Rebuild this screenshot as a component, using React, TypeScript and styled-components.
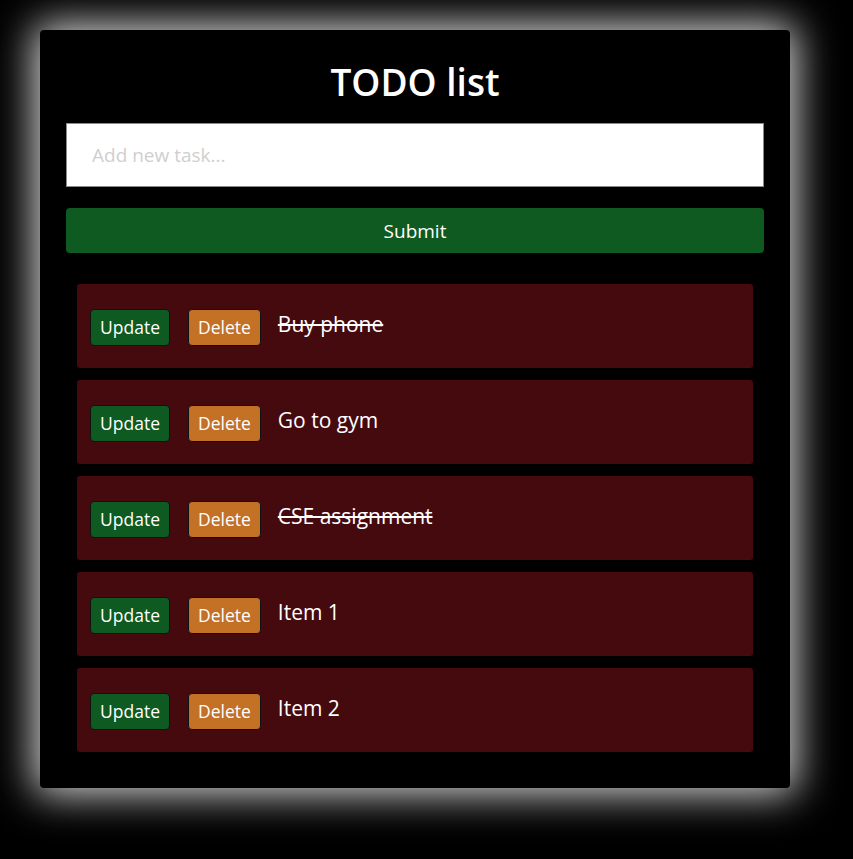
import React from "react";
import styled, { createGlobalStyle } from "styled-components";

const Global = createGlobalStyle`
  html, body { margin: 0; padding: 0; background: #000; }
  body { font-family: "Open Sans", "Noto Sans", sans-serif; color: #fff; }
  * { box-sizing: border-box; }
`;

const Page = styled.div`
  min-height: 859px;
  padding: 30px 63px 71px 40px;
  background: #000;
`;

const Card = styled.div`
  width: 750px;
  height: 758px;
  background: #000;
  border-radius: 4px;
  box-shadow: 0 0 40px 6px rgba(255, 255, 255, 0.85);
  padding: 0 26px 36px;
  display: flex;
  flex-direction: column;
`;

const Title = styled.h1`
  margin: 26px 0 15px;
  text-align: center;
  font-size: 37px;
  font-weight: 600;
  line-height: 52px;
  color: #fff;
`;

const Input = styled.input`
  width: 100%;
  height: 64px;
  border: 1px solid #8a8a8a;
  background: #fff;
  padding: 0 25px;
  font-family: inherit;
  font-size: 19px;
  outline: none;
  &::placeholder { color: #cfcfcf; }
`;

const Submit = styled.button`
  margin-top: 21px;
  width: 100%;
  height: 45px;
  border: none;
  border-radius: 4px;
  background: #0e5a21;
  color: #fff;
  font-family: inherit;
  font-size: 19px;
`;

const List = styled.ul`
  list-style: none;
  margin: 31px 11px 0;
  padding: 0;
  display: flex;
  flex-direction: column;
  gap: 12px;
`;

const Item = styled.li`
  height: 84px;
  background: #450a0e;
  border-radius: 3px;
  padding: 0 14px 0 13px;
  display: flex;
  align-items: center;
  gap: 18px;
`;

const ActionButton = styled.button<{ $kind: "update" | "delete" }>`
  height: 37px;
  padding: 0 9px;
  border: 1px solid #111;
  border-radius: 4px;
  background: ${(p) => (p.$kind === "update" ? "#0e5a21" : "#c37127")};
  color: #fff;
  font-family: inherit;
  font-size: 17.5px;
  margin-top: 2px;
`;

const Text = styled.span<{ $done: boolean }>`
  font-size: 21px;
  color: #fff;
  text-decoration: ${(p) => (p.$done ? "line-through" : "none")};
  margin-bottom: 4px;
  margin-left: -1px;
`;

const todos = [
  { text: "Buy phone", done: true },
  { text: "Go to gym", done: false },
  { text: "CSE assignment", done: true },
  { text: "Item 1", done: false },
  { text: "Item 2", done: false },
];

export default function App() {
  return (
    <>
      <Global />
      <Page>
        <Card>
          <Title>TODO list</Title>
          <Input placeholder="Add new task..." />
          <Submit>Submit</Submit>
          <List>
            {todos.map((t) => (
              <Item key={t.text}>
                <ActionButton $kind="update">Update</ActionButton>
                <ActionButton $kind="delete">Delete</ActionButton>
                <Text $done={t.done}>{t.text}</Text>
              </Item>
            ))}
          </List>
        </Card>
      </Page>
    </>
  );
}
